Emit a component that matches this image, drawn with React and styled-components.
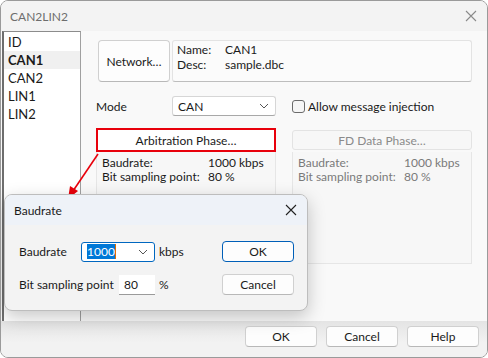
import React from "react";
import styled, { createGlobalStyle, css } from "styled-components";

const Global = createGlobalStyle`
  html, body { margin: 0; padding: 0; background: #ffffff; }
  body { font-family: "Segoe UI", Lato, "Liberation Sans", sans-serif; font-size: 12px; color: #1a1a1a; }
  * { box-sizing: border-box; }
  span { white-space: nowrap; }
`;

const Window = styled.div`
  position: relative;
  width: 488px;
  height: 358px;
  border: 1px solid #9a9a9a;
  border-radius: 8px;
  background: #f9f9f9;
  overflow: hidden;
  display: flex;
  flex-direction: column;
`;

const TitleBar = styled.div`
  height: 30px;
  flex: none;
  display: flex;
  align-items: center;
  justify-content: space-between;
  padding: 0 10px 0 9px;
  background: ${(p) => p.$bg || "#f3f3f3"};
  color: ${(p) => p.$color || "#6d6d6d"};
`;

const CloseBtn = styled.span`
  width: 12px;
  height: 12px;
  display: flex;
  align-items: center;
  justify-content: center;
`;

const Body = styled.div`
  flex: 1;
  display: flex;
  min-height: 0;
`;

const List = styled.div`
  width: 79px;
  margin-left: 1px;
  background: #ffffff;
  border-left: 2px solid #6e6e6e;
  border-top: 1px solid #8c8c8c;
  border-right: 1px solid #a0a0a0;
  border-bottom: 1px solid #a0a0a0;
  padding-top: 1px;
  height: 292px;
`;

const ListItem = styled.div`
  height: 18px;
  line-height: 18px;
  padding-left: 4px;
  font-size: 13px;
  ${(p) =>
    p.$active &&
    css`
      background: #f0f0f0;
      font-weight: bold;
    `}
`;

const Content = styled.div`
  flex: 1;
  padding: 9px 0 0 15px;
  display: flex;
  flex-direction: column;
`;

const TopRow = styled.div`
  display: flex;
  gap: 2px;
  margin-left: 2px;
`;

const Button = styled.button`
  font: inherit;
  font-size: 12px;
  color: ${(p) => (p.$disabled ? "#8f8f8f" : "#1a1a1a")};
  background: ${(p) => (p.$disabled ? "#f7f7f7" : "#fdfdfd")};
  border: 1px solid ${(p) => (p.$primary ? "#005fb8" : p.$disabled ? "#e2e2e2" : "#d0d0d0")};
  border-bottom-color: ${(p) => (p.$primary ? "#005fb8" : p.$disabled ? "#e2e2e2" : "#b8b8b8")};
  border-radius: 4px;
  width: ${(p) => p.$w || 72}px;
  height: ${(p) => p.$h || 21}px;
  padding: 0;
  display: flex;
  align-items: center;
  justify-content: center;
`;

const InfoBox = styled.div`
  width: 300px;
  height: 42px;
  background: #fbfbfb;
  border: 1px solid #e3e3e3;
  border-bottom-color: #bdbdbd;
  border-radius: 3px;
  padding: 1px 4px;
  display: grid;
  grid-template-columns: 48px auto;
  grid-auto-rows: 15px;
  align-content: start;
  line-height: 15px;
`;

const ModeRow = styled.div`
  display: flex;
  align-items: center;
  margin-top: 14px;
  height: 20px;
`;

const Label = styled.span`
  width: ${(p) => (p.$w ? `${p.$w}px` : "auto")};
  flex: none;
`;

const Select = styled.div`
  width: ${(p) => p.$w || 104}px;
  height: 20px;
  background: #ffffff;
  border: 1px solid ${(p) => (p.$focus ? "#0067c0" : "#d6d6d6")};
  border-bottom-color: ${(p) => (p.$focus ? "#0067c0" : "#a8a8a8")};
  border-radius: 3px;
  display: flex;
  align-items: center;
  justify-content: space-between;
  padding: 0 6px 0 5px;
`;

const Selected = styled.span`
  background: #0078d7;
  color: #ffffff;
  line-height: 15px;
  border-right: 1px solid #e06c00;
`;

const Check = styled.span`
  width: 13px;
  height: 13px;
  border: 1px solid #6b6b6b;
  border-radius: 3px;
  background: #f6f6f6;
  margin: 0 3px 0 16px;
  flex: none;
`;

const PhaseRow = styled.div`
  display: flex;
  gap: 16px;
  margin-top: 12px;
`;

const PhaseCol = styled.div`
  width: 180px;
  display: flex;
  flex-direction: column;
  align-items: stretch;
`;

const PhaseButton = styled.div`
  height: ${(p) => (p.$highlight ? 24 : 20)}px;
  margin-top: ${(p) => (p.$highlight ? 0 : 2)}px;
  margin-bottom: ${(p) => (p.$highlight ? 0 : 2)}px;
  display: flex;
  align-items: center;
  justify-content: center;
  background: ${(p) => (p.$highlight ? "#ffffff" : "#f7f7f7")};
  border: ${(p) => (p.$highlight ? "2px solid #e8000b" : "1px solid #e3e3e3")};
  border-radius: ${(p) => (p.$highlight ? 0 : 3)}px;
  color: ${(p) => (p.$highlight ? "#1a1a1a" : "#8a8a8a")};
`;

const PhaseBox = styled.div`
  height: 112px;
  border: 1px solid #e6e6e6;
  border-top: none;
  background: #f7f7f7;
  padding: 4px 5px;
  display: grid;
  grid-template-columns: 106px auto;
  grid-auto-rows: 14px;
  align-content: start;
  line-height: 14px;
  color: ${(p) => (p.$disabled ? "#7a7a7a" : "#1a1a1a")};
`;

const Footer = styled.div`
  height: 36px;
  flex: none;
  display: flex;
  justify-content: flex-end;
  align-items: flex-start;
  gap: 9px;
  padding: 5px 8px 0 0;
  background: linear-gradient(#e4e4e4, #f2f2f2 60%);
`;

const Dialog = styled.div`
  position: absolute;
  left: 3px;
  top: 193px;
  width: 304px;
  height: 117px;
  background: #f3f3f3;
  border: 1px solid #bdbdbd;
  border-radius: 8px;
  box-shadow: 0 6px 18px rgba(0, 0, 0, 0.22);
  overflow: hidden;
  display: flex;
  flex-direction: column;
`;

const DialogBody = styled.div`
  display: grid;
  grid-template-columns: 62px 38px 36px 67px 72px;
  grid-template-rows: 21px 21px;
  row-gap: 12px;
  align-items: center;
  padding: 16px 0 0 14px;
`;

const Input = styled.div`
  width: 36px;
  height: 20px;
  background: #ffffff;
  border-bottom: 1px solid #9a9a9a;
  padding-left: 5px;
  line-height: 20px;
`;

const Unit = styled.span`
  padding-left: 4px;
`;

const Arrow = styled.svg`
  position: absolute;
  left: 60px;
  top: 150px;
  overflow: visible;
`;

const X = ({ color = "#555" }) => (
  <svg width="12" height="12" viewBox="0 0 12 12">
    <path d="M1 1 L11 11 M11 1 L1 11" stroke={color} strokeWidth="1.1" />
  </svg>
);

const Chevron = () => (
  <svg width="10" height="6" viewBox="0 0 10 6">
    <path d="M1 1 L5 5 L9 1" fill="none" stroke="#555" strokeWidth="1" />
  </svg>
);

export default function App() {
  const items = ["ID", "CAN1", "CAN2", "LIN1", "LIN2"];
  return (
    <>
      <Global />
      <Window>
        <TitleBar>
          <span>CAN2LIN2</span>
          <CloseBtn>
            <X color="#8a8a8a" />
          </CloseBtn>
        </TitleBar>
        <Body>
          <List>
            {items.map((it) => (
              <ListItem key={it} $active={it === "CAN1"}>
                {it}
              </ListItem>
            ))}
          </List>
          <Content>
            <TopRow>
              <Button $w={72} $h={42}>Network…</Button>
              <InfoBox>
                <span>Name:</span>
                <span>CAN1</span>
                <span>Desc:</span>
                <span>sample.dbc</span>
              </InfoBox>
            </TopRow>
            <ModeRow>
              <Label $w={76}>Mode</Label>
              <Select>
                <span>CAN</span>
                <Chevron />
              </Select>
              <Check />
              <span>Allow message injection</span>
            </ModeRow>
            <PhaseRow>
              <PhaseCol>
                <PhaseButton $highlight>Arbitration Phase…</PhaseButton>
                <PhaseBox>
                  <span>Baudrate:</span>
                  <span>1000 kbps</span>
                  <span>Bit sampling point:</span>
                  <span>80 %</span>
                </PhaseBox>
              </PhaseCol>
              <PhaseCol>
                <PhaseButton>FD Data Phase…</PhaseButton>
                <PhaseBox $disabled>
                  <span>Baudrate:</span>
                  <span>1000 kbps</span>
                  <span>Bit sampling point:</span>
                  <span>80 %</span>
                </PhaseBox>
              </PhaseCol>
            </PhaseRow>
          </Content>
        </Body>
        <Footer>
          <Button>OK</Button>
          <Button>Cancel</Button>
          <Button>Help</Button>
        </Footer>

        <Arrow width="40" height="50" viewBox="0 0 40 50">
          <line x1="37" y1="3" x2="12" y2="40" stroke="#e8000b" strokeWidth="1.6" />
          <path d="M7 48 L9 35 L17 40 Z" fill="#e8000b" />
        </Arrow>

        <Dialog>
          <TitleBar $bg="#eef2f8" $color="#1a1a1a">
            <span>Baudrate</span>
            <CloseBtn>
              <X color="#222" />
            </CloseBtn>
          </TitleBar>
          <DialogBody>
            <span>Baudrate</span>
            <div style={{ gridColumn: "2 / span 2" }}>
              <Select $w={74} $focus>
                <Selected>1000</Selected>
                <Chevron />
              </Select>
            </div>
            <Unit>kbps</Unit>
            <Button $primary>OK</Button>
            <span style={{ gridColumn: "1 / span 2" }}>Bit sampling point</span>
            <Input>80</Input>
            <Unit>%</Unit>
            <Button>Cancel</Button>
          </DialogBody>
        </Dialog>
      </Window>
    </>
  );
}
